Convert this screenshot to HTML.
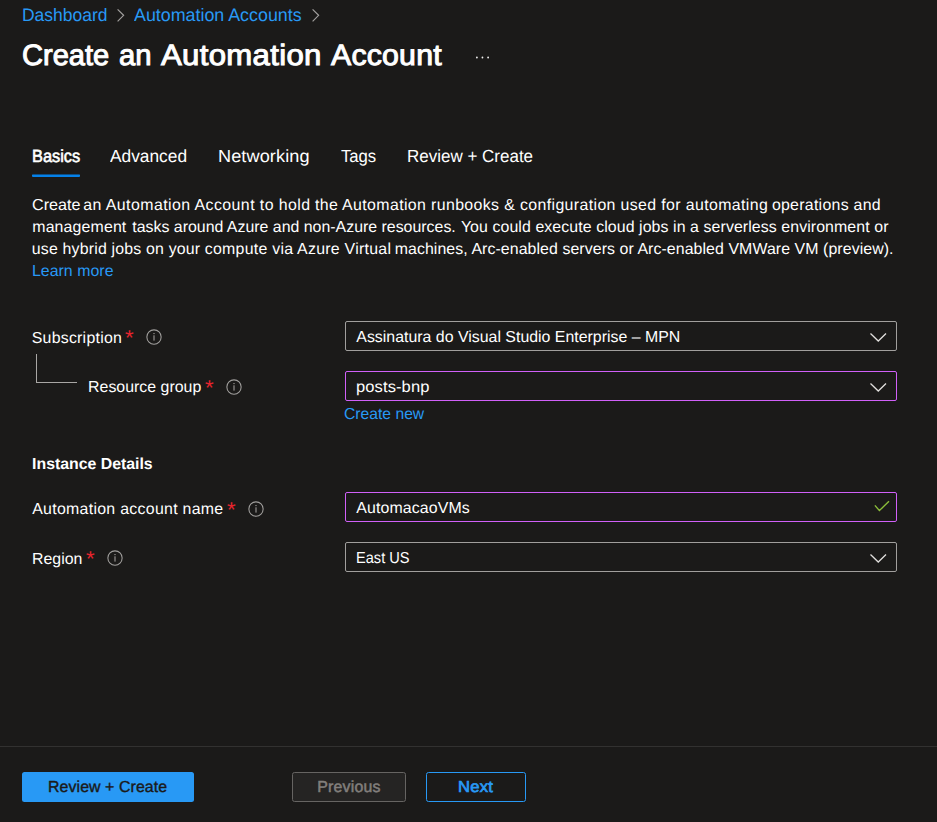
<!DOCTYPE html>
<html lang="en">
<head>
<meta charset="utf-8">
<title>Create an Automation Account</title>
<style>
*{box-sizing:border-box;margin:0;padding:0}
html,body{width:937px;height:822px;overflow:hidden;background:#1b1a19}
body{position:relative;text-rendering:geometricPrecision;font-family:"Liberation Sans",sans-serif;color:#fff}
.t{position:absolute;transform-origin:0 0;white-space:nowrap;line-height:1;color:#fff}
h1,p,nav{font:inherit}
.link{color:#2899f5}
.sb{-webkit-text-stroke:.4px currentColor}
.b{font-weight:700}
.req{color:#e8242d}
.box{position:absolute;left:345px;width:552px;height:30px;border:1px solid #a19f9d;border-radius:2px;background:#1b1a19}
.box.v{border-color:#d060f8}
.sep{position:absolute;left:0;top:746px;width:937px;height:1px;background:#323130}
.btn{position:absolute;top:772px;height:30px;border-radius:2.5px}
.ul{position:absolute;left:32px;top:174px;width:48px;height:3px;background:linear-gradient(#0d4e85 0,#0d4e85 1px,#0581e8 1px,#0581e8 3px);border-radius:1px}
svg{position:absolute;overflow:visible}
</style>
</head>
<body>
<!-- breadcrumb -->
<nav>
<span class="t link" id="bc1" style="left:22.18px;top:5.76px;font-size:18px;letter-spacing:0.000px;transform:scaleX(0.9706)">Dashboard</span>
<svg style="left:117px;top:9px" width="8" height="13" viewBox="0 0 8 13"><path d="M.6.4 6.6 6.3.6 12.4" fill="none" stroke="#a19f9d" stroke-width="1.2"/></svg>
<span class="t link" id="bc2" style="left:134.44px;top:5.76px;font-size:18px;letter-spacing:0.000px;transform:scaleX(0.9911)">Automation Accounts</span>
<svg style="left:312px;top:9px" width="8" height="13" viewBox="0 0 8 13"><path d="M.6.4 6.6 6.3.6 12.4" fill="none" stroke="#a19f9d" stroke-width="1.2"/></svg>
</nav>
<!-- title -->
<h1>
<span class="t" id="t1" style="left:21.80px;top:41.30px;font-size:29.4px;letter-spacing:0.000px;transform:scaleX(0.9893);color:#fff;font-weight:400;-webkit-text-stroke:1px #fff">Create</span>
<span class="t" id="t2" style="left:118.99px;top:41.30px;font-size:29.4px;letter-spacing:0.000px;transform:scaleX(0.9939);color:#fff;font-weight:400;-webkit-text-stroke:1px #fff">an</span>
<span class="t" id="t3" style="left:161.40px;top:41.30px;font-size:29.4px;letter-spacing:0.300px;transform:scaleX(1.0594);color:#fff;font-weight:400;-webkit-text-stroke:1px #fff">Automation</span>
<span class="t" id="t4" style="left:331.04px;top:41.30px;font-size:29.4px;letter-spacing:0.200px;transform:scaleX(1.0300);color:#fff;font-weight:400;-webkit-text-stroke:1px #fff">Account</span>
</h1>
<svg style="left:475px;top:55px" width="16" height="5" viewBox="0 0 16 5"><circle cx="1.9" cy="2.5" r=".9" fill="#f3f2f1"/><circle cx="7.45" cy="2.5" r=".9" fill="#f3f2f1"/><circle cx="13.1" cy="2.5" r=".9" fill="#f3f2f1"/></svg>
<!-- tabs -->
<span class="t" id="tab1" style="left:32.36px;top:148.10px;font-size:17.6px;letter-spacing:0.000px;transform:scaleX(0.9305);-webkit-text-stroke:.6px #fff">Basics</span>
<span class="t" id="tab2" style="left:109.90px;top:148.10px;font-size:17.6px;letter-spacing:0.000px;transform:scaleX(0.9842)">Advanced</span>
<span class="t" id="tab3" style="left:218.19px;top:148.10px;font-size:17.6px;letter-spacing:0.100px;transform:scaleX(1.0299)">Networking</span>
<span class="t" id="tab4" style="left:341.17px;top:148.10px;font-size:17.6px;letter-spacing:-0.100px;transform:scaleX(0.9514)">Tags</span>
<span class="t" id="tab5" style="left:407.05px;top:148.10px;font-size:17.6px;letter-spacing:0.000px;transform:scaleX(0.9656)">Review + Create</span>
<div class="ul"></div>
<!-- description -->
<p>
<span class="t" id="d1" style="left:31.72px;top:197.54px;font-size:15.9px;letter-spacing:0.000px;transform:scaleX(1.0143)">Create</span>
<span class="t" id="d1d" style="left:83.29px;top:197.54px;font-size:15.9px;letter-spacing:0.436px">an Automation Account to hold</span>
<span class="t" id="d1c" style="left:315.00px;top:197.54px;font-size:15.9px;letter-spacing:0.374px">the Automation runbooks &amp; configuration used for automating</span>
<span class="t" id="d1b" style="left:771.90px;top:197.54px;font-size:15.9px;letter-spacing:0.275px">operations and</span>
<span class="t" id="d2" style="left:32.25px;top:219.54px;font-size:15.9px;letter-spacing:0.141px">management</span>
<span class="t" id="d2b" style="left:132.31px;top:219.54px;font-size:15.9px;letter-spacing:0.004px">tasks around Azure and non-Azure resources.</span>
<span class="t" id="d2c" style="left:460.88px;top:219.54px;font-size:15.9px;letter-spacing:0.087px">You could execute cloud jobs in a serverless environment or</span>
<span class="t" id="d3" style="left:31.74px;top:241.54px;font-size:15.9px;letter-spacing:0.185px">use hybrid jobs on your</span>
<span class="t" id="d3b" style="left:204.80px;top:241.54px;font-size:15.9px;letter-spacing:0.259px">compute via Azure Virtual</span>
<span class="t" id="d3c" style="left:394.70px;top:241.54px;font-size:15.9px;letter-spacing:0.076px">machines, Arc-enabled servers or Arc-enabled VMWare VM (preview).</span>
<span class="t link" id="d4" style="left:31.95px;top:263.54px;font-size:15.9px;letter-spacing:0.030px;color:#2899f5">Learn more</span>
</p>
<!-- form -->
<span class="t" id="l1" style="left:31.71px;top:330.54px;font-size:15.9px;letter-spacing:0.243px">Subscription</span>
<span class="t req" id="a1" style="left:125.00px;top:328.04px;font-size:21.5px;letter-spacing:0.000px;transform:scaleX(1.0400);color:#e8242d">*</span>
<svg style="left:145.50px;top:328.65px" width="16" height="16" viewBox="0 0 16 16"><circle cx="8" cy="8" r="7.15" fill="none" stroke="#a19f9d" stroke-width="1.05"/><circle cx="8" cy="4.6" r=".7" fill="#b3b0ad"/><path d="M8 6.3V11.6" stroke="#b3b0ad" stroke-width=".95"/></svg>
<div class="box" style="top:321px"></div>
<svg style="left:869.8px;top:332.9px" width="17" height="9" viewBox="0 0 17 9"><path d="M.5.5 8.25 8 16 .5" fill="none" stroke="#e1dfdd" stroke-width="1.3"/></svg>
<span class="t" id="v1" style="left:356.30px;top:329.54px;font-size:15.9px;letter-spacing:0.004px">Assinatura do Visual Studio Enterprise – MPN</span>
<span class="t" id="l2" style="left:88.06px;top:379.54px;font-size:15.9px;letter-spacing:0.008px">Resource group</span>
<span class="t req" id="a2" style="left:205.19px;top:377.64px;font-size:21.5px;letter-spacing:0.000px;transform:scaleX(1.0400);color:#e8242d">*</span>
<div style="position:absolute;left:36px;top:354px;width:41px;height:29px;border-left:1px solid #a9a7a5;border-bottom:1px solid #a9a7a5"></div>
<svg style="left:225.50px;top:378.70px" width="16" height="16" viewBox="0 0 16 16"><circle cx="8" cy="8" r="7.15" fill="none" stroke="#a19f9d" stroke-width="1.05"/><circle cx="8" cy="4.6" r=".7" fill="#b3b0ad"/><path d="M8 6.3V11.6" stroke="#b3b0ad" stroke-width=".95"/></svg>
<div class="box v" style="top:371px"></div>
<svg style="left:869.8px;top:382.9px" width="17" height="9" viewBox="0 0 17 9"><path d="M.5.5 8.25 8 16 .5" fill="none" stroke="#e1dfdd" stroke-width="1.3"/></svg>
<span class="t" id="v2" style="left:356.37px;top:379.54px;font-size:15.9px;letter-spacing:0.100px;transform:scaleX(1.0396)">posts-bnp</span>
<span class="t link" id="cn" style="left:344.31px;top:406.54px;font-size:15.9px;letter-spacing:0.000px;transform:scaleX(0.9868);color:#2899f5">Create new</span>
<span class="t b" id="ih" style="left:32.09px;top:456.54px;font-size:15.9px;letter-spacing:-0.026px">Instance Details</span>
<span class="t" id="l3" style="left:32.22px;top:501.54px;font-size:15.9px;letter-spacing:0.287px">Automation account name</span>
<span class="t req" id="a3" style="left:227.33px;top:500.14px;font-size:21.5px;letter-spacing:0.000px;transform:scaleX(1.0400);color:#e8242d">*</span>
<svg style="left:247.50px;top:500.60px" width="16" height="16" viewBox="0 0 16 16"><circle cx="8" cy="8" r="7.15" fill="none" stroke="#a19f9d" stroke-width="1.05"/><circle cx="8" cy="4.6" r=".7" fill="#b3b0ad"/><path d="M8 6.3V11.6" stroke="#b3b0ad" stroke-width=".95"/></svg>
<div class="box v" style="top:492px"></div>
<svg style="left:874px;top:500px" width="16" height="12" viewBox="0 0 16 12"><path d="M.9 5.4 5.4 10.6 15 1.2" fill="none" stroke="#8cbd3a" stroke-width="1.4"/></svg>
<span class="t" id="v3" style="left:356.30px;top:500.54px;font-size:15.9px;letter-spacing:0.120px">AutomacaoVMs</span>
<span class="t" id="l4" style="left:31.94px;top:551.54px;font-size:15.9px;letter-spacing:0.027px">Region</span>
<span class="t req" id="a4" style="left:86.35px;top:548.84px;font-size:21.5px;letter-spacing:0.000px;transform:scaleX(1.0400);color:#e8242d">*</span>
<svg style="left:106.50px;top:549.60px" width="16" height="16" viewBox="0 0 16 16"><circle cx="8" cy="8" r="7.15" fill="none" stroke="#a19f9d" stroke-width="1.05"/><circle cx="8" cy="4.6" r=".7" fill="#b3b0ad"/><path d="M8 6.3V11.6" stroke="#b3b0ad" stroke-width=".95"/></svg>
<div class="box" style="top:542px"></div>
<svg style="left:869.8px;top:553.9px" width="17" height="9" viewBox="0 0 17 9"><path d="M.5.5 8.25 8 16 .5" fill="none" stroke="#e1dfdd" stroke-width="1.3"/></svg>
<span class="t" id="v4" style="left:355.83px;top:550.54px;font-size:15.9px;letter-spacing:0.000px;transform:scaleX(0.9178)">East US</span>
<!-- footer -->
<div class="sep"></div>
<div class="btn" style="left:22px;width:172px;background:#2899f5"></div>
<span class="t sb" id="b1" style="left:48.06px;top:779.54px;font-size:15.9px;letter-spacing:0.079px;color:#1b1a19">Review + Create</span>
<div class="btn" style="left:292px;width:114px;background:#252423;border:1px solid #666462"></div>
<span class="t" id="b2" style="left:317.24px;top:779.54px;font-size:15.9px;letter-spacing:0.210px;color:#827f7c;-webkit-text-stroke:.5px #827f7c">Previous</span>
<div class="btn" style="left:426px;width:100px;border:1px solid #2899f5"></div>
<span class="t" id="b3" style="left:458.00px;top:779.54px;font-size:15.9px;letter-spacing:0.200px;transform:scaleX(1.0453);color:#2899f5;-webkit-text-stroke:.7px #2899f5">Next</span>
</body>
</html>
